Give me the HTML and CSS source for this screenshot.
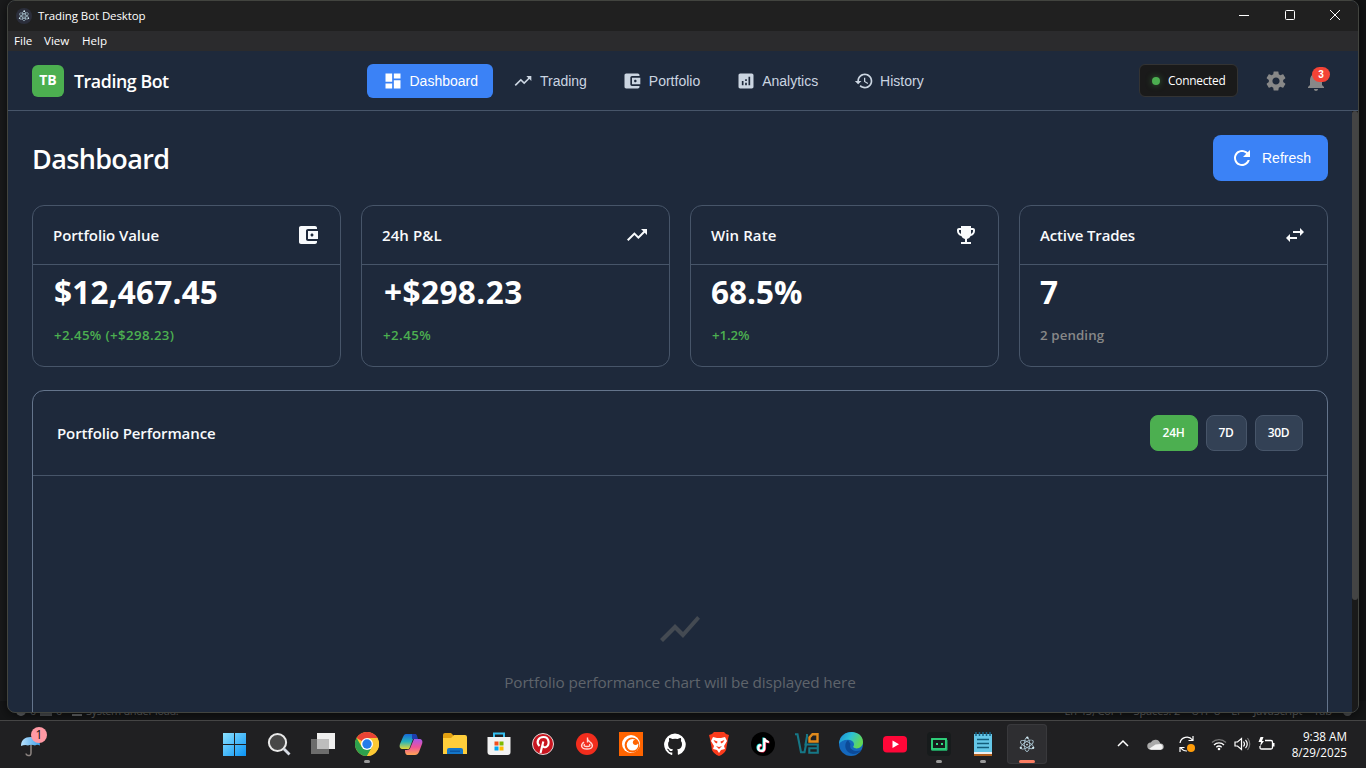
FILE: index.html
```html
<!DOCTYPE html>
<html lang="en">
<head>
<meta charset="utf-8">
<title>Trading Bot Desktop</title>
<link rel="stylesheet" href="styles.css">
</head>
<body>
<svg class="defs" width="0" height="0">
  <defs>
    <symbol id="trend" viewBox="0 0 24 24"><path d="M16 6l2.29 2.29-4.88 4.88-4-4L2 16.59 3.41 18l6-6 4 4 6.3-6.29L22 12V6z"/></symbol>
    <symbol id="wallet" viewBox="0 0 24 24"><path d="M21 18v1c0 1.1-.9 2-2 2H5c-1.11 0-2-.9-2-2V5c0-1.1.89-2 2-2h14c1.1 0 2 .9 2 2v1h-9c-1.11 0-2 .9-2 2v8c0 1.1.89 2 2 2h9zm-9-2h10V8H12v8zm4-2.5c-.83 0-1.5-.67-1.5-1.5s.67-1.5 1.5-1.5 1.5.67 1.5 1.5-.67 1.5-1.5 1.5z"/></symbol>
    <symbol id="electron" viewBox="0 0 24 24"><g fill="none" stroke="#a9c3cf" stroke-width="1.3"><ellipse cx="12" cy="12" rx="10" ry="3.8" transform="rotate(28 12 12)"/><ellipse cx="12" cy="12" rx="10" ry="3.8" transform="rotate(-32 12 12)"/><ellipse cx="12" cy="12" rx="10" ry="3.8" transform="rotate(90 12 12)"/></g><g fill="#d5edf5"><circle cx="12" cy="12" r="1.2"/><circle cx="3.2" cy="16.6" r="1.6"/><circle cx="20.8" cy="16.6" r="1.6"/><circle cx="12.5" cy="2.3" r="1.6"/></g></symbol>
  </defs>
</svg>
<div class="desktop">
  <div class="editor-status">
    <div class="status-left"><i class="st-dot"></i><span>0</span><i class="st-tri"></i><span>0</span><i class="st-box"></i><span>System under load!</span></div>
    <div class="status-right"><span>Ln 43, Col 4</span><span>Spaces: 2</span><span>UTF-8</span><span>LF</span><span>JavaScript</span><span>Tab</span><i class="st-bell"></i></div>
  </div>

  <div class="window">
    <div class="titlebar">
      <svg class="app-icon" viewBox="0 0 16 16"><circle cx="8" cy="8" r="8" fill="#2b2e3b"/><use href="#electron" x="2" y="2" width="12" height="12"/></svg>
      <span class="window-title">Trading Bot Desktop</span>
      <div class="controls">
        <svg viewBox="0 0 12 12"><path d="M1 6.5h10"/></svg>
        <svg viewBox="0 0 12 12"><rect x="1.5" y="1.5" width="9" height="9" rx="1"/></svg>
        <svg viewBox="0 0 12 12"><path d="M1 1l10 10M11 1L1 11"/></svg>
      </div>
    </div>
    <div class="menubar"><span class="m-file">File</span><span class="m-view">View</span><span>Help</span></div>

    <header class="header">
      <div class="brand"><div class="logo">TB</div><span class="brand-name">Trading Bot</span></div>
      <nav class="nav">
        <div class="nav-item active"><svg viewBox="0 0 24 24"><path d="M3 13h8V3H3v10zm0 8h8v-6H3v6zm10 0h8V11h-8v10zm0-18v6h8V3h-8z"/></svg>Dashboard</div>
        <div class="nav-item"><svg><use href="#trend"/></svg>Trading</div>
        <div class="nav-item"><svg><use href="#wallet"/></svg>Portfolio</div>
        <div class="nav-item"><svg viewBox="0 0 24 24"><path d="M19 3H5c-1.1 0-2 .9-2 2v14c0 1.1.9 2 2 2h14c1.1 0 2-.9 2-2V5c0-1.1-.9-2-2-2zM9 17H7v-5h2v5zm4 0h-2v-3h2v3zm0-5h-2v-2h2v2zm4 5h-2V7h2v10z"/></svg>Analytics</div>
        <div class="nav-item"><svg viewBox="0 0 24 24"><path d="M13 3c-4.97 0-9 4.03-9 9H1l3.89 3.89.07.14L9 12H6c0-3.87 3.13-7 7-7s7 3.13 7 7-3.13 7-7 7c-1.93 0-3.68-.79-4.94-2.06l-1.42 1.42C8.27 19.99 10.51 21 13 21c4.97 0 9-4.03 9-9s-4.03-9-9-9zm-1 5v5l4.28 2.54.72-1.21-3.5-2.08V8H12z"/></svg>History</div>
      </nav>
      <div class="header-right">
        <div class="connection"><i></i><span>Connected</span></div>
        <div class="icon-btn"><svg viewBox="0 0 24 24"><path d="M19.14 12.94c.04-.3.06-.61.06-.94 0-.32-.02-.64-.07-.94l2.03-1.58c.18-.14.23-.41.12-.61l-1.92-3.32c-.12-.22-.37-.29-.59-.22l-2.39.96c-.5-.38-1.03-.7-1.62-.94l-.36-2.54c-.04-.24-.24-.41-.48-.41h-3.84c-.24 0-.43.17-.47.41l-.36 2.54c-.59.24-1.13.57-1.62.94l-2.39-.96c-.22-.08-.47 0-.59.22L2.74 8.87c-.12.21-.08.47.12.61l2.03 1.58c-.05.3-.09.63-.09.94s.02.64.07.94l-2.03 1.58c-.18.14-.23.41-.12.61l1.92 3.32c.12.22.37.29.59.22l2.39-.96c.5.38 1.03.7 1.62.94l.36 2.54c.05.24.24.41.48.41h3.84c.24 0 .44-.17.47-.41l.36-2.54c.59-.24 1.13-.56 1.62-.94l2.39.96c.22.08.47 0 .59-.22l1.92-3.32c.12-.22.07-.47-.12-.61l-2.01-1.58zM12 15.6c-1.98 0-3.6-1.62-3.6-3.6s1.62-3.6 3.6-3.6 3.6 1.62 3.6 3.6-1.62 3.6-3.6 3.6z"/></svg></div>
        <div class="icon-btn bell"><svg viewBox="0 0 24 24"><path d="M12 22c1.1 0 2-.9 2-2h-4c0 1.1.89 2 2 2zm6-6v-5c0-3.07-1.64-5.64-4.5-6.32V4c0-.83-.67-1.5-1.5-1.5s-1.5.67-1.5 1.5v.68C7.63 5.36 6 7.92 6 11v5l-2 2v1h16v-1l-2-2z"/></svg><span class="badge">3</span></div>
      </div>
    </header>

    <div class="body">
      <main class="content">
        <div class="page-head">
          <h1>Dashboard</h1>
          <div class="refresh"><svg viewBox="0 0 24 24"><path d="M17.65 6.35C16.2 4.9 14.21 4 12 4c-4.42 0-7.99 3.58-7.99 8s3.57 8 7.99 8c3.73 0 6.84-2.55 7.73-6h-2.08c-.82 2.33-3.04 4-5.65 4-3.31 0-6-2.69-6-6s2.69-6 6-6c1.66 0 3.14.69 4.22 1.78L13 11h7V4l-2.35 2.35z"/></svg>Refresh</div>
        </div>
        <div class="cards">
          <section class="card">
            <div class="card-head"><h3 class="t-value">Portfolio Value</h3><svg><use href="#wallet"/></svg></div>
            <div class="card-body"><div class="value v-value">$12,467.45</div><div class="change c-long">+2.45% (+$298.23)</div></div>
          </section>
          <section class="card">
            <div class="card-head"><h3 class="t-pl">24h P&amp;L</h3><svg><use href="#trend"/></svg></div>
            <div class="card-body"><div class="value v-pl">+$298.23</div><div class="change c-mid">+2.45%</div></div>
          </section>
          <section class="card">
            <div class="card-head"><h3 class="t-win">Win Rate</h3><svg viewBox="0 0 24 24"><path d="M19 5h-2V3H7v2H5c-1.1 0-2 .9-2 2v1c0 2.55 1.92 4.63 4.39 4.94.63 1.5 1.98 2.63 3.61 2.96V19H7v2h10v-2h-4v-3.1c1.63-.33 2.98-1.46 3.61-2.96C19.08 12.63 21 10.55 21 8V7c0-1.1-.9-2-2-2zM5 8V7h2v3.82C5.84 10.4 5 9.3 5 8zm14 0c0 1.3-.84 2.4-2 2.82V7h2v1z"/></svg></div>
            <div class="card-body"><div class="value v-win">68.5%</div><div class="change c-short">+1.2%</div></div>
          </section>
          <section class="card">
            <div class="card-head"><h3 class="t-act">Active Trades</h3><svg viewBox="0 0 24 24"><path d="M6.99 11L3 15l3.99 4v-3H14v-2H6.99v-3zM21 9l-3.99-4v3H10v2h7.01v3L21 9z"/></svg></div>
            <div class="card-body"><div class="value">7</div><div class="change neutral">2 pending</div></div>
          </section>
        </div>
        <section class="chart">
          <div class="chart-head">
            <h3 class="t-chart">Portfolio Performance</h3>
            <div class="ranges"><span class="range on">24H</span><span class="range">7D</span><span class="range">30D</span></div>
          </div>
          <div class="placeholder"><svg viewBox="0 0 24 24"><path d="M3.5 18.49l6-6.01 4 4L22 6.92l-1.41-1.41-7.09 7.97-4-4L2 16.99z"/></svg><p>Portfolio performance chart will be displayed here</p></div>
        </section>
      </main>
      <div class="scrollbar"><div class="thumb"></div></div>
    </div>
  </div>

  <footer class="taskbar">
    <div class="weather"><svg viewBox="0 0 30 32"><defs><linearGradient id="umb"><stop stop-color="#b9e3ff"/><stop offset="1" stop-color="#3f9fe8"/></linearGradient></defs><path d="M11 12v14q0 3-3 2.500-2-.3-2-2" fill="none" stroke="#8d8582" stroke-width="1.500"/><path d="M1 19c0-6 4-9 9.500-9S20 13 20 18.500q-3-1.500-5 0-4-1.500-7 0-3-1-7 .5z" fill="url(#umb)"/></svg><span class="w-badge">1</span></div>
    <div class="apps">
      <div class="app"><svg viewBox="0 0 24 24"><defs><linearGradient id="win" x2="1" y2="1" ><stop stop-color="#8be2ff"/><stop offset="1" stop-color="#0a93f5"/></linearGradient></defs><path fill="url(#win)" d="M0 1h11v11H0zM12 1h11v11H12zM0 13h11v11H0zM12 13h11v11H12z"/></svg></div>
      <div class="app"><svg viewBox="0 0 24 24"><circle cx="10.500" cy="10.500" r="8.600" fill="#474747" stroke="#e9e9e9" stroke-width="2"/><path d="M17 17l5.500 5.500" stroke="#d6dbe4" stroke-width="2.800"/></svg></div>
      <div class="app"><svg viewBox="0 0 24 24"><path d="M6 1h18v16H6z" fill="#efefef"/><path d="M0 7h18v15H0z" fill="#6c6c6c"/><path d="M6 7h12v10H6z" fill="#bdbdbd"/></svg></div>
      <div class="app open"><svg viewBox="0 0 24 24"><circle cx="12" cy="12" r="12" fill="#fcc934"/><path d="M12 12L1.600 6A12 12 0 0 1 22.400 6H12z" fill="#ea4335"/><path d="M1.600 6A12 12 0 0 0 12 24l5.200-9L12 12 6.800 15z" fill="#2da04d"/><path d="M22.400 6H12v6l5.200 3L12 24A12 12 0 0 0 22.400 6z" fill="#fcc934"/><circle cx="12" cy="12" r="6" fill="#fff"/><circle cx="12" cy="12" r="4.700" fill="#267be9"/></svg></div>
      <div class="app"><svg viewBox="0 0 24 24"><defs><linearGradient id="cpa" x2="0" y2="1"><stop stop-color="#1769d8"/><stop offset=".5" stop-color="#25b3bd"/><stop offset="1" stop-color="#e9d833"/></linearGradient><linearGradient id="cpb" x2="0" y2="1"><stop stop-color="#a958e8"/><stop offset=".5" stop-color="#ef5399"/><stop offset="1" stop-color="#ffa653"/></linearGradient></defs><path d="M7 2h8c2 0 2.500 1 3 4l-4 1-3 8c-1 3-2 2-4 2H4c-3 0-4-2-3-5l3-7c1-2 1.500-3 3-3z" fill="url(#cpa)"/><path d="M15 7h5c3 0 4 2 3 5l-3 8c-1 2-2 3-4 3H9c-2 0-3-1-3-5h2c2 0 3-1 4-4z" fill="url(#cpb)"/><path d="M13 2h3c2 0 2 2 3 5h-6z" fill="#1d3eae"/></svg></div>
      <div class="app"><svg viewBox="0 0 24 24"><path d="M0 3q0-2 2-2h6l3 3-3 4H0z" fill="#e3a111"/><path d="M0 6h8l3-3h11q2 0 2 2v17H0z" fill="#ffce3b"/><path d="M4 22v-4q0-2 2-2h12q2 0 2 2v4z" fill="#1376ca"/><path d="M7 18.500h10v1.500H7z" fill="#0b56a4"/></svg></div>
      <div class="app"><svg viewBox="0 0 24 24"><path d="M7 6V1.500h10V6" fill="none" stroke="#36bfef" stroke-width="2"/><path d="M.5 5h23v15q0 3-3 3h-17q-3 0-3-3z" fill="#f2f2f2"/><path fill="#f34f1c" d="M7.500 9.500h4v4h-4z"/><path fill="#7fba00" d="M12.500 9.500h4v4h-4z"/><path fill="#01a6f0" d="M7.500 14.500h4v4h-4z"/><path fill="#ffba01" d="M12.500 14.500h4v4h-4z"/></svg></div>
      <div class="app"><svg viewBox="0 0 24 24"><circle cx="12" cy="12" r="10.500" fill="#c9151f" stroke="#e6d9da" stroke-width="1"/><path d="M8.500 14c-4-4-1-9 4-9 6 0 6.500 8 2.500 10-1.500.7-3 0-3.300-1.200M12.300 9.500L9.500 21" fill="none" stroke="#fff" stroke-width="2.100"/></svg></div>
      <div class="app"><svg viewBox="0 0 24 24"><circle cx="12" cy="12" r="11" fill="#f22d1d"/><path d="M12.500 5.500v5M9 10c-4 3-3 7 3 7s7-4 3-7l-2.500-2.500M9.500 12c-1 2 0 2.500 2.500 2.500s3.500-.5 2.500-2.500" fill="none" stroke="#ffd8d3" stroke-width="1.400"/></svg></div>
      <div class="app"><svg viewBox="0 0 24 24"><path d="M0 0h24v24H0z" fill="#ff6400"/><circle cx="12" cy="12" r="9" fill="#fff"/><circle cx="13" cy="13" r="7.400" fill="#ff6400"/><circle cx="13.500" cy="12.800" r="5.800" fill="#fff"/><circle cx="16.500" cy="10.300" r="2.600" fill="#ff6400"/></svg></div>
      <div class="app"><svg viewBox="0 0 24 24"><path fill="#fff" d="M12 1.500a11 11 0 0 0-3.500 21.400c.6.100.8-.2.800-.5v-2c-3 .7-3.700-1.300-3.700-1.300-.5-1.300-1.200-1.600-1.200-1.600-1-.7.100-.7.100-.7 1.100.1 1.700 1.100 1.700 1.100 1 1.700 2.600 1.200 3.200.9.100-.7.400-1.200.7-1.500-2.500-.3-5-1.200-5-5.400 0-1.200.4-2.200 1.100-3-.1-.300-.5-1.400.1-2.900 0 0 1-.3 3 1.100a10 10 0 0 1 5.500 0c2-1.400 3-1.100 3-1.100.6 1.500.2 2.600.1 2.900.7.800 1.100 1.800 1.100 3 0 4.200-2.500 5.100-5 5.400.4.300.8 1 .8 2v3c0 .3.200.6.800.5A11 11 0 0 0 12 1.500z"/></svg></div>
      <div class="app"><svg viewBox="0 0 24 24"><path d="M7 0h10l2 2 3 1-1 4-2 11q-2 4-7 6-5-2-7-6L3 7 2 3l3-1z" fill="#fb3b1c"/><path d="M6 5l4 1h4l4-1 2 4-3 5 1 3-4 1-2 3-2-3-4-1 1-3-3-5z" fill="#fff"/><path d="M6.500 8l4 1.500-.5 2-2-1zM17.500 8l-4 1.500.5 2 2-1zM9 14l3 1 3-1-3 3z" fill="#fb3b1c"/></svg></div>
      <div class="app"><svg viewBox="0 0 24 24"><circle cx="12" cy="12" r="12" fill="#000"/><g fill="none" stroke-width="2.200"><path d="M12.500 5.500v10a3 3 0 1 1-3-3M12.500 6q1 3 4.500 3.500" stroke="#25f4ee"/><path d="M14 6.500v10a3 3 0 1 1-3-3M14 7q1 3 4.500 3.500" stroke="#fe2c55"/><path d="M13.300 6v10a3 3 0 1 1-3-3M13.300 6.500q1 3 4.500 3.500" stroke="#fff"/></g></svg></div>
      <div class="app"><svg viewBox="0 0 24 24"><g fill="none" stroke-width="2.100"><path d="M0 2.200h2.500L6 20.300h3.500L11 12.500" stroke="#167786"/><path d="M12 2v2.500L10.500 12.500h12.300v3.700h-8.500v4.600h8.500v-4" stroke="#167786"/><path d="M14.500 9.500V5.500l3-3.300h5v7.300z" stroke="#e18a1c" stroke-width="2.400"/></g></svg></div>
      <div class="app"><svg viewBox="0 0 24 24"><defs><linearGradient id="eda" x2="1" y2=".4"><stop stop-color="#1987d5"/><stop offset=".5" stop-color="#2cc1d5"/><stop offset="1" stop-color="#62d755"/></linearGradient></defs><circle cx="12" cy="12" r="12" fill="#1468bd"/><path d="M0 12C1-4 24-3 24 10c0 6-7 8-10 5 2-2 1-6-3-7-5-1-9 1-11 4z" fill="url(#eda)"/><path d="M9 8c-5 4-3 13 5 14 4 0 7-2 8.500-4-7 3-13-1-11-6z" fill="#0c4a98"/></svg></div>
      <div class="app"><svg viewBox="0 0 24 24"><rect y="4" width="24" height="16.500" rx="4" fill="#ff0738"/><path d="M9.500 8.500l6.500 3.700-6.500 3.800z" fill="#fff"/></svg></div>
      <div class="app open"><svg viewBox="0 0 24 24"><rect width="24" height="24" rx="4" fill="#171b1c"/><rect x="5" y="7" width="14" height="10" fill="none" stroke="#31df83" stroke-width="1.800"/><path d="M4.500 18.300H20V8" fill="none" stroke="#25b36c"/><path d="M9 11h2v2H9zM14 11h2v2h-2z" fill="#31df83"/></svg></div>
      <div class="app open"><svg viewBox="0 0 24 24"><path d="M3 2h18v19H3z" fill="#65c7e8"/><path d="M3 20h18v2H3z" fill="#eee"/><path d="M3 22h18v2H3z" fill="#b3601c"/><path d="M5 0v4M8.500 0v4M12 0v4M15.500 0v4M19 0v4" stroke="#176487" stroke-width="1.500"/><path d="M6 7.500h12M6 11.500h12M6 15.500h12" stroke="#135d7b" stroke-width="1.500"/></svg></div>
      <div class="app current"><svg viewBox="0 0 24 24"><use href="#electron" x="3.500" y="4" width="17" height="17"/></svg></div>
    </div>
    <div class="tray">
      <svg class="chev" viewBox="0 0 12 12"><path d="M1 8l5-5 5 5" fill="none" stroke="#fff" stroke-width="1.500"/></svg>
      <svg class="cloud" viewBox="0 0 16 12"><path d="M4 11a3.500 3.500 0 0 1-.5-7 5 5 0 0 1 9 1 3 3 0 0 1 .5 6z" fill="#aaa"/><path d="M2 10l6-4 5-.500a3 3 0 0 1 0 5.500H4z" fill="#f3f3f3"/></svg>
      <svg class="sync" viewBox="0 0 18 18"><path d="M2 8a7 7 0 0 1 12.500-3M15 1v4.500h-4.500M9 16a7 7 0 0 1-6-3M2 17v-4.500h4.500" fill="none" stroke="#fff" stroke-width="1.200"/><circle cx="13" cy="13" r="4" fill="#ff9d0a"/></svg>
      <svg class="wifi" viewBox="0 0 16 14"><g fill="none" stroke-width="1.300"><path d="M1 5.500a10 10 0 0 1 14 0" stroke="#777"/><path d="M3 8a7 7 0 0 1 10 0M5.300 10.200a4 4 0 0 1 5.400 0" stroke="#fff"/></g><circle cx="8" cy="12" r="1.300" fill="#fff"/></svg>
      <svg class="vol" viewBox="0 0 17 14"><g fill="none" stroke="#fff" stroke-width="1.200"><path d="M1 5h2.500L7.500 1.500v11L3.500 9H1zM9.500 4.500q2 2.500 0 5M11.500 2.800q3.500 4.200 0 8.400"/><path d="M13.500 1q4.500 6 0 12" stroke="#777"/></g></svg>
      <svg class="batt" viewBox="0 0 17 14"><path d="M7 3.500h6q1.500 0 1.500 1.500v5.500q0 1.500-1.500 1.500H3.500Q2 12 2 10.500V9" fill="none" stroke="#fff" stroke-width="1.300"/><path d="M15 6h1.500v3.500H15z" fill="#fff"/><path d="M2.500 0L.5 5H3L2 9.500 6 4H4l1.500-4z" fill="#fff"/></svg>
      <div class="clock"><span class="time">9:38 AM</span><span class="date">8/29/2025</span></div>
    </div>
  </footer>
</div>
</body>
</html>
```

FILE: styles.css
```css
* { box-sizing: border-box; }
body { margin: 0; background: #151617; font-family: "Open Sans", "Noto Sans", sans-serif; color: #fff; }
.defs { position: absolute; }
h1, h3, p { margin: 0; font-weight: 600; }
svg { display: block; flex: none; fill: currentColor; }

.desktop { position: relative; width: 1366px; height: 768px; overflow: hidden; display: flex; flex-direction: column; justify-content: space-between; background: linear-gradient(90deg, #1a1b1c 0, #191919 50%, #121314 100%); }
.editor-status { position: absolute; left: 0; right: 0; top: 701px; height: 19px; display: flex; justify-content: space-between; padding: 0 14px 0 16px; font-size: 11px; line-height: 19px; color: #686b6e; background: #151617; }
.status-left { display: flex; gap: 4px; align-items: center; letter-spacing: -.35px; }
.status-right { display: flex; gap: 11px; letter-spacing: -.1px; }
.st-dot { width: 10px; height: 10px; margin-top: 1px; border-radius: 50%; background: #686b6e; }
.st-tri { width: 12px; height: 10px; background: #505356; }
.st-box { width: 10px; height: 11px; margin-left: 6px; border-bottom: 2px solid #686b6e; }
.st-bell { width: 9px; height: 9px; margin-top: 6px; border-radius: 50%; background: #505356; }

.window { position: relative; width: 1352px; height: 713px; margin-left: 7px; border: 1px solid #42443f; border-radius: 8px; overflow: hidden; display: flex; flex-direction: column; background: #1e293b; box-shadow: 0 2px 12px #0009; }
.titlebar { height: 30px; flex: none; display: flex; align-items: center; padding: 0 17px 1px 8px; background: #202020; }
.app-icon { width: 16px; height: 16px; }
.window-title { margin-left: 6px; font-size: 11.500px; letter-spacing: -.1px; line-height: 16px; }
.controls { margin-left: auto; display: flex; gap: 34px; padding-bottom: 1px; }
.controls svg { width: 12px; height: 12px; fill: none; stroke: #fff; stroke-width: 1; }
.controls svg:nth-child(2) { margin-right: -1px; }
.menubar { height: 20px; flex: none; display: flex; padding-left: 6px; font-size: 11.600px; line-height: 19px; background: #2b2b2d; }
.menubar .m-file { width: 30px; }
.menubar .m-view { width: 38px; }

.header { height: 60px; flex: none; display: flex; align-items: center; padding: 0 24px; border-bottom: 1px solid #475569; }
.brand { width: 335px; display: flex; align-items: center; gap: 10px; }
.logo { width: 32px; height: 32px; border-radius: 6px; background: #4caf50; font-size: 14px; font-weight: 700; line-height: 30px; text-align: center; }
.brand-name { font-size: 17.800px; font-weight: 600; line-height: 24px; letter-spacing: -.43px; }
.nav { display: flex; gap: 4px; font: 500 14px "Liberation Sans", sans-serif; color: #cbd5e1; }
.nav-item { height: 34px; display: flex; align-items: center; gap: 6.500px; padding: 0 15.450px 0 16px; border-radius: 6px; }
.nav-item svg { width: 20px; height: 20px; }
.nav-item.active { background: #3b82f6; color: #fff; }
.header-right { margin-left: auto; display: flex; align-items: center; color: #888; }
.connection { width: 99px; height: 33px; margin-right: 20px; display: flex; align-items: center; gap: 8px; padding-left: 12px; border: 1px solid #333; border-radius: 6px; background: #1a1a1a; color: #fff; font-size: 11.900px; letter-spacing: -.25px; }
.connection span { padding-bottom: 2px; }
.connection i { width: 8px; height: 8px; border-radius: 50%; background: #4caf50; box-shadow: 0 0 6px #4caf5080; }
.icon-btn { padding: 6px; margin-left: 4px; }
.icon-btn:nth-child(2) { margin-left: 0; }
.icon-btn svg { width: 24px; height: 24px; }
.bell { position: relative; }
.badge { position: absolute; left: 14px; top: 4px; width: 18px; height: 15px; border-radius: 8px; background: #f44336; color: #fff; font: 700 10px/15px "Liberation Sans", sans-serif; text-align: center; }

.body { flex: 1; min-height: 0; display: flex; overflow: hidden; }
.content { width: 1344px; padding: 24px; }
.scrollbar { width: 6px; background: #1a1a1a; }
.thumb { height: 489px; border-radius: 3px; background: #444; }
.page-head { display: flex; justify-content: space-between; height: 46px; margin-bottom: 24px; }
h1 { font-size: 27px; line-height: 48px; letter-spacing: -.65px; }
.refresh { width: 115px; display: flex; align-items: center; gap: 8px; padding-left: 17px; border-radius: 8px; background: #3b82f6; font: 500 14px "Liberation Sans", sans-serif; }
.refresh svg { width: 24px; height: 24px; }
.cards { display: grid; grid-template-columns: repeat(4, 309px); gap: 20px; margin-bottom: 23px; }
.card { height: 162px; border: 1px solid #475569; border-radius: 12px; }
.card-head { height: 59px; display: flex; align-items: center; justify-content: space-between; padding: 0 20px; border-bottom: 1px solid #475569; }
.card-head svg { width: 24px; height: 24px; color: #f8fafc; }
h3 { font-size: 15px; font-weight: 650; line-height: 22px; color: #f8fafc; letter-spacing: -.08px; }
.t-pl { letter-spacing: .1px; }
.t-win { letter-spacing: .1px; }
.t-act { letter-spacing: -.15px; }
.t-chart { letter-spacing: -.11px; }
.card-body { padding: 4px 20px; }
.value { font-size: 31.500px; font-weight: 700; line-height: 46px; }
.v-value { padding-left: 1px; letter-spacing: .2px; }
.v-pl { padding-left: 2px; letter-spacing: .45px; }
.change { margin-top: 9px; font-size: 13.300px; font-weight: 600; line-height: 22px; letter-spacing: .05px; color: #4caf50; }
.c-long { padding-left: 1px; letter-spacing: .36px; }
.c-mid { padding-left: 1px; letter-spacing: .45px; }
.c-short { padding-left: 1px; letter-spacing: -.1px; }
.neutral { color: #888; letter-spacing: .1px; }
.chart { height: 400px; border: 1px solid #64748b; border-radius: 12px; }
.chart-head { height: 85px; display: flex; align-items: center; justify-content: space-between; padding: 0 24px; border-bottom: 1px solid #475569; }
.ranges { display: flex; gap: 8px; }
.range { width: 48px; height: 36px; border: 1px solid #475569; border-radius: 8px; background: #334155; font-size: 12px; font-weight: 600; line-height: 34px; letter-spacing: -.3px; text-align: center; padding-right: 1px; }
.range:nth-child(2) { width: 41px; }
.range.on { background: #4caf50; border-color: #4caf50; }
.placeholder { padding-top: 129px; display: flex; flex-direction: column; align-items: center; color: #444a52; }
.placeholder svg { width: 48px; height: 48px; }
.placeholder p { margin-top: 18px; font-size: 15.300px; font-weight: 400; line-height: 22px; letter-spacing: -.11px; color: #5f646b; }

.taskbar { position: relative; height: 48px; flex: none; display: flex; border-top: 1px solid #454545; background: #202022; }
.weather { position: relative; width: 213px; padding: 6px 0 0 20px; }
.weather svg { width: 30px; height: 32px; }
.w-badge { position: absolute; left: 31px; top: 6px; width: 16px; height: 16px; border-radius: 50%; background: #ff99a4; color: #111; font-size: 12px; line-height: 16px; text-align: center; }
.apps { display: flex; padding-top: 3px; }
.app { position: relative; width: 40px; height: 40px; margin: 0 2px; padding: 8px; border-radius: 4px; }
.app svg { width: 24px; height: 24px; }
.open::after, .current::after { content: ""; position: absolute; left: 17px; bottom: 1px; width: 6px; height: 3px; border-radius: 2px; background: #9a9a9a; }
.current { background: #2e2e31; box-shadow: inset 0 0 0 1px #39393c; }
.current::after { left: 12px; width: 16px; background: #fa7d62; }
.tray { flex: 1; display: flex; align-items: center; padding: 0 19px 1px 68px; }
.chev { width: 12px; height: 12px; }
.cloud { width: 17px; height: 13px; margin-left: 18px; }
.sync { width: 18px; height: 18px; margin-left: 14px; }
.wifi { width: 16px; height: 14px; margin-left: 15px; }
.vol { width: 17px; height: 14px; margin-left: 7px; }
.batt { width: 17px; height: 14px; margin-left: 7px; }
.clock { margin-left: auto; display: flex; flex-direction: column; align-items: flex-end; font-size: 11.700px; line-height: 16px; }
```
